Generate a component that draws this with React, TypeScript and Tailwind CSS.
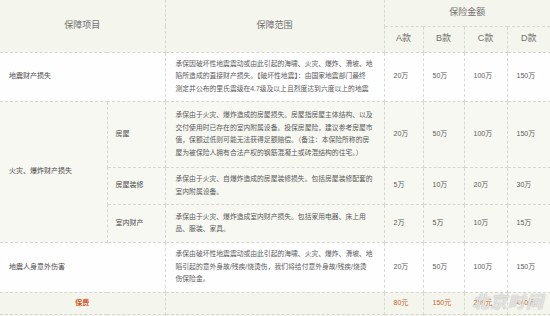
const font = "font-['Liberation_Sans','Noto_Sans_CJK_SC',sans-serif]";

const cell = "border border-dashed border-[#d8d8d2] align-middle";

interface Row {
  amounts: string[];
  lines: string[];
}

const Desc: React.FC<{ lines: string[] }> = ({ lines }) => (
  <div className="text-[6.8px] leading-[12.5px] text-[#5a5a5a] whitespace-nowrap">
    {lines.map((l, i) => (
      <div key={i}>{l}</div>
    ))}
  </div>
);

const Amounts: React.FC<{ values: string[]; tone?: string }> = ({ values, tone }) => (
  <>
    {values.map((v, i) => (
      <td key={i} className={`${cell} pl-[9px] text-[7px] ${tone ?? "text-[#5a5a5a]"}`}>
        {v}
      </td>
    ))}
  </>
);

const quake: Row = {
  amounts: ["20万", "50万", "100万", "150万"],
  lines: [
    "承保因破坏性地震震动或由此引起的海啸、火灾、爆炸、滑坡、地",
    "陷所造成的直接财产损失。【破坏性地震】：由国家地震部门最终",
    "测定并公布的里氏震级在4.7级及以上且烈度达到六度以上的地震",
  ],
};

const fire: (Row & { name: string; h: string })[] = [
  {
    name: "房屋",
    h: "h-[66px]",
    amounts: ["20万", "50万", "100万", "150万"],
    lines: [
      "承保由于火灾、爆炸造成的房屋损失。房屋指房屋主体结构、以及",
      "交付使用时已存在的室内附属设备。投保房屋险，建议参考房屋市",
      "值，保额过低则可能无法获得足额赔偿。（备注：本保险所称的房",
      "屋为被保险人拥有合法产权的钢筋混凝土或砖混结构的住宅。）",
    ],
  },
  {
    name: "房屋装修",
    h: "h-[37px]",
    amounts: ["5万", "10万", "20万", "30万"],
    lines: ["承保由于火灾、自爆炸造成的房屋装修损失。包括房屋装修配套的", "室内附属设备。"],
  },
  {
    name: "室内财产",
    h: "h-[38px]",
    amounts: ["2万", "5万", "10万", "15万"],
    lines: ["承保由于火灾、爆炸造成室内财产损失。包括家用电器、床上用", "品、服装、家具。"],
  },
];

const injury: Row = {
  amounts: ["20万", "50万", "100万", "150万"],
  lines: [
    "承保由破坏性地震震动或由此引起的海啸、火灾、爆炸、滑坡、地",
    "陷引起的意外身故/残疾/烧烫伤，我们将给付意外身故/残疾/烧烫",
    "伤保险金。",
  ],
};

export default function App() {
  return (
    <div className={`relative w-[550px] h-[316px] overflow-hidden bg-[#f4f5ec] ${font}`}>
      <table className="w-[550px] table-fixed border-collapse">
        <colgroup>
          <col className="w-[107px]" />
          <col className="w-[58px]" />
          <col className="w-[219px]" />
          <col className="w-[39px]" />
          <col className="w-[41px]" />
          <col className="w-[43px]" />
          <col className="w-[43px]" />
        </colgroup>
        <tbody>
          <tr className="h-[26px] bg-[#f4f5ec] text-[9px] text-[#707070]">
            <td rowSpan={2} colSpan={2} className={`${cell} border-t-0 border-l-0 text-center`}>
              保障项目
            </td>
            <td rowSpan={2} className={`${cell} border-t-0 text-center`}>
              保障范围
            </td>
            <td colSpan={4} className={`${cell} border-t-0 border-r-0 text-center`}>
              保险金额
            </td>
          </tr>
          <tr className="h-[26px] bg-[#f4f5ec] text-[9px] text-[#707070]">
            {["A款", "B款", "C款", "D款"].map((k) => (
              <td key={k} className={`${cell} last:border-r-0 text-center`}>
                {k}
              </td>
            ))}
          </tr>

          <tr className="h-[49px] bg-[#fefefe]">
            <td colSpan={2} className={`${cell} border-l-0 pl-[9px] text-[7px] text-[#4a4a4a]`}>
              地震财产损失
            </td>
            <td className={`${cell} pl-[10px]`}>
              <Desc lines={quake.lines} />
            </td>
            <Amounts values={quake.amounts} />
          </tr>

          {fire.map((r, i) => (
            <tr key={r.name} className={`${r.h} bg-[#f7f8f2]`}>
              {i === 0 && (
                <td rowSpan={3} className={`${cell} border-l-0 pl-[9px] text-[7px] text-[#4a4a4a]`}>
                  火灾、爆炸财产损失
                </td>
              )}
              <td className={`${cell} pl-[8px] text-[7px] text-[#4a4a4a]`}>{r.name}</td>
              <td className={`${cell} pl-[10px]`}>
                <Desc lines={r.lines} />
              </td>
              <Amounts values={r.amounts} />
            </tr>
          ))}

          <tr className="h-[50px] bg-[#fefefe]">
            <td colSpan={2} className={`${cell} border-l-0 pl-[9px] text-[7px] text-[#4a4a4a]`}>
              地震人身意外伤害
            </td>
            <td className={`${cell} pl-[10px]`}>
              <Desc lines={injury.lines} />
            </td>
            <Amounts values={injury.amounts} />
          </tr>

          <tr className="h-[22px] bg-[#f4f5ec]">
            <td colSpan={2} className={`${cell} border-l-0 text-center text-[7px] font-bold text-[#d9531e]`}>
              保费
            </td>
            <td className={cell}></td>
            <Amounts values={["80元", "150元", "299元", "440元"]} tone="text-[#c8642e]" />
          </tr>
          <tr className="h-[10px] bg-[#f4f5ec]">
            <td colSpan={7} className={`${cell} border-l-0`}></td>
          </tr>
        </tbody>
      </table>
      <div className="absolute right-[6px] bottom-[1px] text-[17px] font-bold italic tracking-[1px] text-white/70 [text-shadow:0_0_1px_#9a9a9a]">
        北京时间
      </div>
    </div>
  );
}
